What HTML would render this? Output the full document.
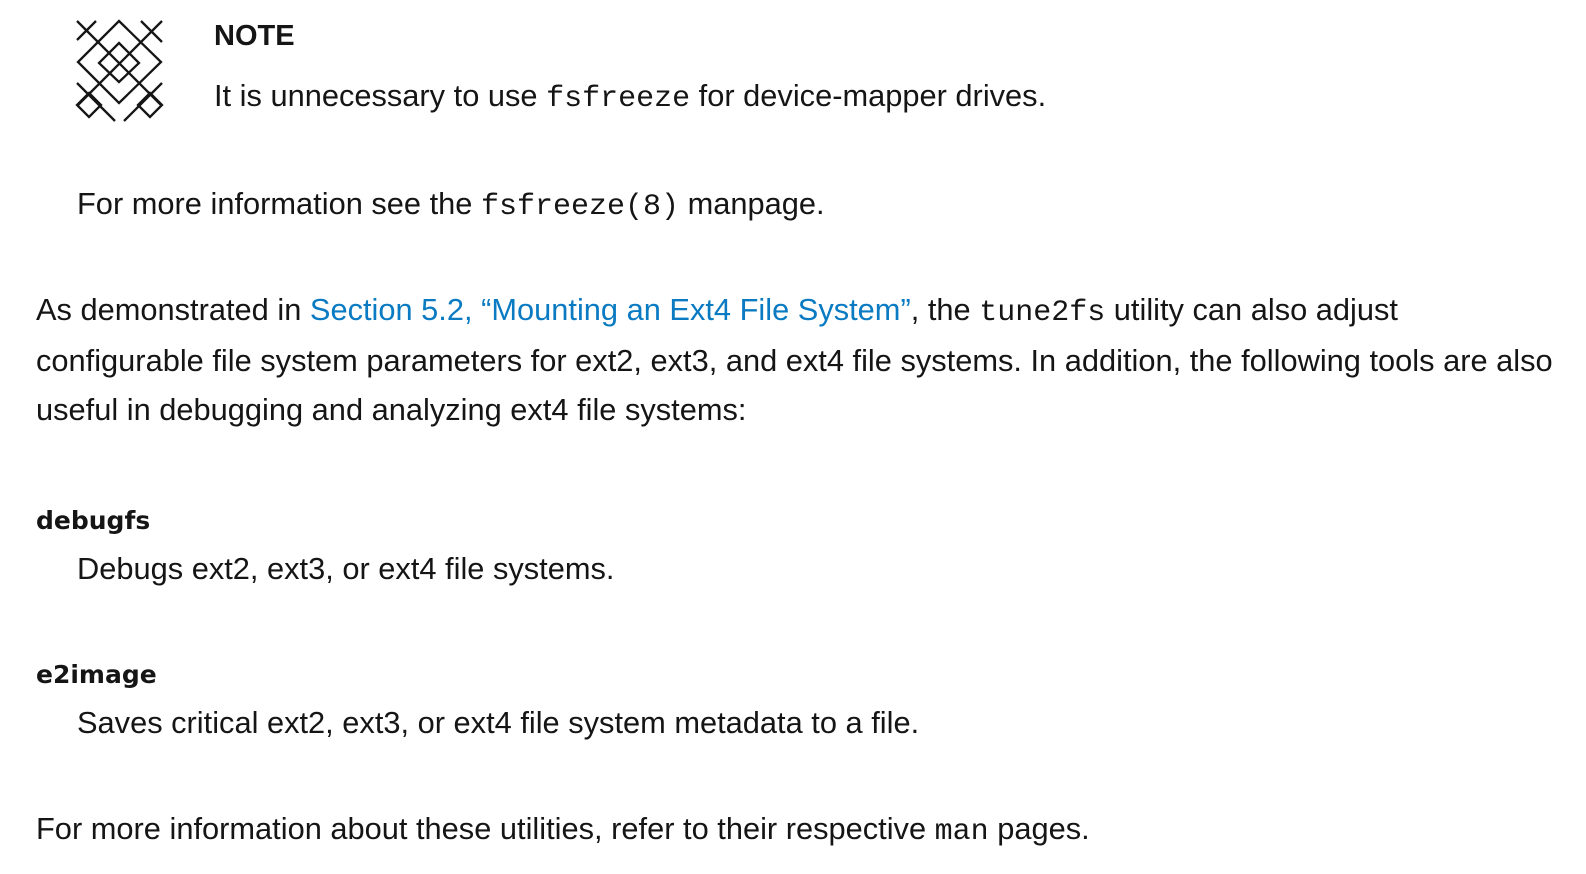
<!DOCTYPE html>
<html><head><style>
body{margin:0;background:#fff;font-family:"Liberation Sans",sans-serif;color:#151515;font-size:30.8px;}
.p{position:absolute;white-space:nowrap;}
code{font-family:"Liberation Mono",monospace;font-size:30px;}
a{color:#0a7bc2;text-decoration:none}
b.t{font-family:"DejaVu Sans",sans-serif;font-weight:bold;font-size:25px}
</style></head><body>
<svg class="p" style="left:0;top:0" width="200" height="140" viewBox="0 0 200 140">
<g stroke="#151515" stroke-width="2.3" fill="none">
<polygon points="119,21 161,62 119,103 78,62"/>
<polygon points="119,43 139,63 119,82 99,63"/>
<line x1="77" y1="21" x2="162" y2="106"/>
<line x1="162" y1="21" x2="77" y2="106"/>
<line x1="96" y1="21" x2="77" y2="40"/>
<line x1="141" y1="21" x2="162" y2="42"/>
<polygon points="89,93 101,105 89,117 77,105"/>
<polygon points="150,93 162,105 150,117 138,105"/>
<line x1="77" y1="83" x2="115" y2="121"/>
<line x1="162" y1="83" x2="124" y2="121"/>
</g></svg>
<div class="p" style="left:214px;top:20px;font-weight:bold;font-size:29px">NOTE</div>
<div class="p" style="left:214px;top:78px">It is unnecessary to use <code>fsfreeze</code> for device-mapper drives.</div>
<div class="p" style="left:77px;top:186px">For more information see the <code>fsfreeze(8)</code> manpage.</div>
<div class="p" style="left:36px;top:292px">As demonstrated in <a>Section 5.2, “Mounting an Ext4 File System”</a>, the <code>tune2fs</code> utility can also adjust</div>
<div class="p" style="left:36px;top:343px">configurable file system parameters for ext2, ext3, and ext4 file systems. In addition, the following tools are also</div>
<div class="p" style="left:36px;top:392px">useful in debugging and analyzing ext4 file systems:</div>
<div class="p" style="left:36px;top:501px"><b class="t">debugfs</b></div>
<div class="p" style="left:77px;top:551px">Debugs ext2, ext3, or ext4 file systems.</div>
<div class="p" style="left:36px;top:655px"><b class="t">e2image</b></div>
<div class="p" style="left:77px;top:705px">Saves critical ext2, ext3, or ext4 file system metadata to a file.</div>
<div class="p" style="left:36px;top:811px">For more information about these utilities, refer to their respective <code>man</code> pages.</div>
</body></html>
